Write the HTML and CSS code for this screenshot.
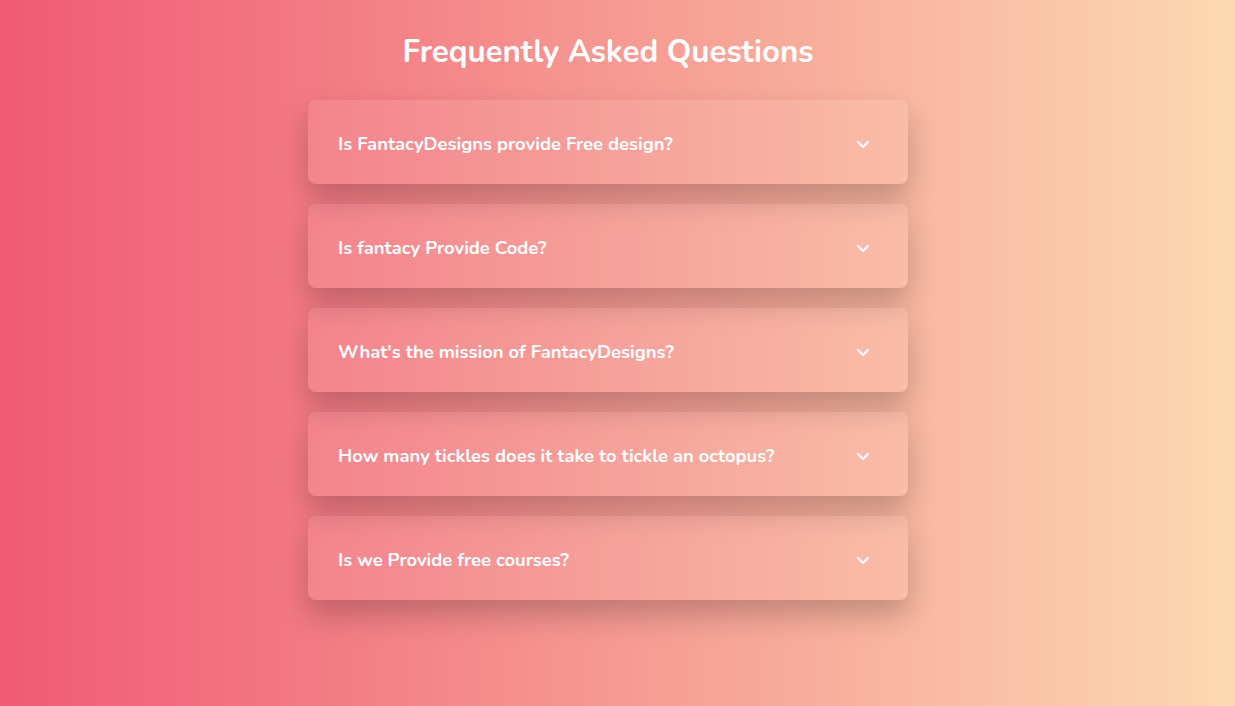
FILE: index.html
```html
<!DOCTYPE html>
<html>
<head>
    <title>FAQ</title>
    <link rel="stylesheet" href="styles.css">
</head>
<body>
    <h1 class="title">Frequently Asked Questions</h1>
    <div class="faq-list">
        <div class="faq">
            <span class="question">Is FantacyDesigns provide Free design?</span>
            <svg class="chevron" viewBox="0 0 14 9"><path d="M2 2l5 5 5-5"/></svg>
        </div>
        <div class="faq">
            <span class="question">Is fantacy Provide Code?</span>
            <svg class="chevron" viewBox="0 0 14 9"><path d="M2 2l5 5 5-5"/></svg>
        </div>
        <div class="faq">
            <span class="question">What's the mission of FantacyDesigns?</span>
            <svg class="chevron" viewBox="0 0 14 9"><path d="M2 2l5 5 5-5"/></svg>
        </div>
        <div class="faq">
            <span class="question">How many tickles does it take to tickle an octopus?</span>
            <svg class="chevron" viewBox="0 0 14 9"><path d="M2 2l5 5 5-5"/></svg>
        </div>
        <div class="faq">
            <span class="question">Is we Provide free courses?</span>
            <svg class="chevron" viewBox="0 0 14 9"><path d="M2 2l5 5 5-5"/></svg>
        </div>
    </div>
</body>
</html>
```

FILE: styles.css
```css
* {
    box-sizing: border-box;
}

html, body {
    height: 100%;
}

body {
    margin: 0;
    padding-right: 19px;
    background: linear-gradient(to right, #f05a74, #fcd9b1);
    font-family: "Nunito", "Lato", "Noto Sans", sans-serif;
    color: #fff;
}

.title {
    margin: 0;
    padding-top: 32px;
    text-align: center;
    font-size: 31.3px;
    font-weight: 700;
    line-height: 40px;
}

.faq-list {
    width: 600px;
    margin: 28px auto 0;
    display: flex;
    flex-direction: column;
    gap: 20px;
}

.faq {
    height: 84px;
    padding: 0 38px 0 30px;
    display: flex;
    align-items: center;
    justify-content: space-between;
    background-color: rgba(255, 255, 255, 0.08);
    border-radius: 8px;
    box-shadow: 0 15px 30px rgba(0, 0, 0, 0.22);
}

.question {
    font-size: 18.4px;
    font-weight: 700;
    margin-top: 2px;
}

.chevron {
    width: 14px;
    height: 9px;
    fill: none;
    stroke: #fff;
    stroke-width: 2.4;
    stroke-linecap: round;
    stroke-linejoin: round;
    margin-top: 4px;
}
```
